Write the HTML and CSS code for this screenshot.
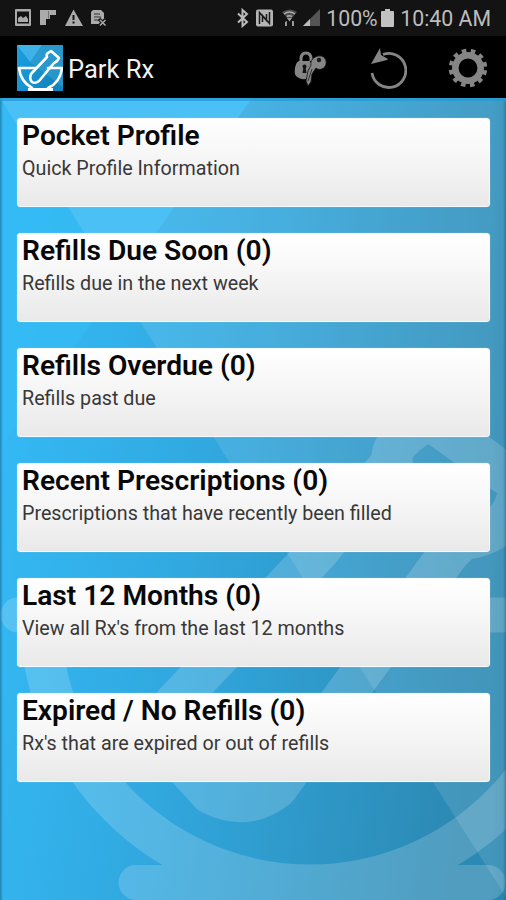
FILE: index.html
```html
<!DOCTYPE html>
<html lang="en">
<head>
<meta charset="utf-8">
<title>Park Rx</title>
<link rel="stylesheet" href="styles.css">
</head>
<body>
<div class="status">
  <svg class="status-left" width="96" height="20" viewBox="14 8 96 20" fill="#aaa">
    <path fill-rule="evenodd" d="M16 9h14q1 0 1 1v15q0 1-1 1H16q-1 0-1-1V10q0-1 1-1zm1 2.500v12h12v-12z"/>
    <path d="M18 22v-4l3-2 2 2 3-2 2 3v3z"/>
    <path d="M40 10h16v5h-6v4h-4v6h-6z"/>
    <path fill="#777" d="M48 11h1v8h-1z"/>
    <path fill-rule="evenodd" d="M73.500 9.500 83 26H65zM72.500 15v5h2v-5zm0 6.500v2h2v-2z"/>
    <path d="M93 10h8l3 3v6l-3 5h-10V12z"/>
    <path d="M94 14h6M94 17h7M94 20h5" stroke="#333" stroke-width="1.200"/>
    <path d="m99 19 7 7m0-7-7 7" stroke="#151515" stroke-width="3.500"/>
    <path d="m100 20 5.500 5.500m0-5.500-5.500 5.500" stroke="#aaa" stroke-width="1.500"/>
  </svg>
  <div class="status-right">
    <svg width="90" height="20" viewBox="234 8 90 20">
      <path d="m238 13.500 9 8.500-4.500 4V10l4.500 4-9 8.500" fill="none" stroke="#bbb" stroke-width="2"/>
      <rect x="256" y="9.500" width="17" height="17" rx="2" fill="#b5b5b5"/>
      <path d="M259.500 24V12.500l7 8V14m3-2v11.500l-7-8V22" fill="none" stroke="#1b1b1b" stroke-width="1.500"/>
      <path d="M282 12q8-5 15 0l-7.500 9z" fill="#4e4e4e"/>
      <path d="M284 14q5.500-4 11 0M287 16.500q2.500-1.500 5 0" fill="none" stroke="#aaa" stroke-width="1.500"/>
      <path d="M289.500 21.500 287 18h5zM285 22l2-1v5h-2zM292 21h2v5h-2z" fill="#999"/>
      <path d="M320 9v17h-17z" fill="#555"/><path d="m303 26 7-7v7z" fill="#bbb"/>
    </svg>
    <span class="pct">100%</span>
    <svg class="battery" width="13" height="18" viewBox="0 0 13 18"><path d="M4 0h5v2h3q1 0 1 1v14q0 1-1 1H1q-1 0-1-1V3q0-1 1-1h3z" fill="#c2c2c2"/></svg>
    <span class="clock">10:40 AM</span>
  </div>
</div>
<header class="bar">
  <svg class="logo" width="46" height="46" viewBox="0 0 46 46">
    <defs><linearGradient id="lg" x2="1" y2=".4"><stop stop-color="#1b9fe0"/><stop offset="1" stop-color="#1185bd"/></linearGradient></defs>
    <rect width="46" height="46" fill="url(#lg)"/>
    <path d="M0 0h25L13 17z" fill="#3fb3e9"/>
    <path d="m13 17 33 25V0H25z" fill="#3ba3d2" opacity=".55"/>
    <g fill="none" stroke="#fff" stroke-width="2.600" stroke-linejoin="round" stroke-linecap="round">
      <path d="M19 23H2c1 9 6 16 13 20M31 23h14c-1 10-7 17-14 20"/>
      <path d="m14 29 16-17q-1-3 1-4l3-2 8 7q-2 4-5 5L22 36q-4 3-7 1-3-3-1-8z"/>
    </g>
    <path d="M11 43h25v3H11z" fill="#fff"/>
  </svg>
  <h1 class="app-title">Park Rx</h1>
  <nav class="actions">
    <svg width="34" height="38" viewBox="294 50 34 38">
      <path d="M301 62v-2q0-6 5-6t5 6v2" fill="none" stroke="#858585" stroke-width="3"/>
      <path d="M299 62h11q3 5 0 17-9 3-14-2-2-3-1-8 1-6 4-7z" fill="#858585"/>
      <circle cx="304.500" cy="67.500" r="2" fill="#111"/><path d="M303.500 68h2l1 6h-4z" fill="#111"/>
      <path d="M318 57c6-1 9 4 8 8-1 5-7 7-10 4l-4 6-1 8-3 4-2-5 2-10 3-6c-1-5 3-8 7-9z" fill="#858585" stroke="#111" stroke-width=".8"/>
      <circle cx="319" cy="61" r="2.200" fill="#1b1b1b"/>
      <path d="m308 82 4-12" stroke="#333" stroke-width="1"/>
    </svg>
    <svg width="38" height="42" viewBox="370 47 38 42">
      <path d="M384 54.500a17 17 0 1 1-11 18.500" fill="none" stroke="#858585" stroke-width="2.800"/>
      <path d="m381 48 1 7 7 4-1 1-16 4z" fill="#858585"/>
    </svg>
    <svg width="40" height="40" viewBox="-20 -20 40 40">
      <circle r="12.700" fill="none" stroke="#858585" stroke-width="6.600"/>
      <circle r="17.200" fill="none" stroke="#858585" stroke-width="4.200" stroke-dasharray="4.500 4.506" stroke-dashoffset="-2.300"/>
    </svg>
  </nav>
</header>
<main class="screen">
  <svg class="backdrop" viewBox="0 98 506 802" preserveAspectRatio="none">
    <defs>
      <linearGradient id="base" gradientUnits="userSpaceOnUse" x1="0" y1="450" x2="506" y2="530">
        <stop stop-color="#34b9f4"/><stop offset=".4" stop-color="#31a8df"/><stop offset="1" stop-color="#2c89b3"/>
      </linearGradient>
      <linearGradient id="edge" gradientUnits="userSpaceOnUse" x1="0" y1="0" x2="506" y2="0">
        <stop stop-color="#135b82" stop-opacity=".55"/><stop offset=".006" stop-color="#135b82" stop-opacity="0"/>
        <stop offset=".97" stop-color="#135b82" stop-opacity="0"/><stop offset=".994" stop-color="#135b82" stop-opacity=".06"/><stop offset="1" stop-color="#135b82" stop-opacity=".5"/>
      </linearGradient>
    </defs>
    <path d="M0 98h506v802H0z" fill="url(#base)"/>
    <path d="M0 98 118 287 0 448z" fill="#34baf4" opacity=".7"/>
    <path d="M0 98h252L118 287z" fill="#4bc0f5"/>
    <path d="M252 98h254v799L118 287z" fill="#fff" opacity=".11"/>
    <g opacity=".17" fill="none" stroke="#fff" stroke-width="41">
      <path d="M18 615H520" stroke-width="35" stroke-linecap="round"/>
      <path d="M40.500 615.500a269.500 269.500 0 0 0 539 0"/>
      <path d="M136 882.500H488" stroke-width="35" stroke-linecap="round"/>
      <path d="m392 462-75 91-147 155q-14 20 6 48l35 38q36 18 66-6L449 553l13-13q34-4 50-28l10-26-92-66q-18 8-31 22-8 8-7 20z" stroke-linejoin="round"/>
    </g>
    <path d="M0 98h506v802H0z" fill="url(#edge)"/>
    <path d="M0 98h506v3H0z" fill="#239bd4" opacity=".75"/>
  </svg>
  <div class="list">
    <section class="card"><h2>Pocket Profile</h2><p>Quick Profile Information</p></section>
    <section class="card"><h2>Refills Due Soon (0)</h2><p>Refills due in the next week</p></section>
    <section class="card"><h2>Refills Overdue (0)</h2><p>Refills past due</p></section>
    <section class="card"><h2>Recent Prescriptions (0)</h2><p>Prescriptions that have recently been filled</p></section>
    <section class="card"><h2>Last 12 Months (0)</h2><p>View all Rx's from the last 12 months</p></section>
    <section class="card"><h2>Expired / No Refills (0)</h2><p>Rx's that are expired or out of refills</p></section>
  </div>
</main>
</body>
</html>
```
FILE: styles.css
```css
* { box-sizing: border-box; }
body { margin: 0; width: 506px; height: 900px; overflow: hidden; background: #000; font-family: Roboto, "Liberation Sans", sans-serif; display: flex; flex-direction: column; }
svg { display: block; flex: none; }
.status { height: 36px; flex: none; background: #131313; display: flex; align-items: center; justify-content: space-between; padding: 0 15px 0 14px; color: #bdbdbd; font-size: 21.300px; line-height: 36px; }
.status-right { display: flex; align-items: center; white-space: nowrap; }
.status-right span { position: relative; top: 1px; }
.pct { margin-left: 2px; width: 52px; }
.battery { margin: 0 6px 0 3px; }
.bar { height: 62px; flex: none; background: #000; display: flex; align-items: center; padding: 2px 18px 0 17px; }
.app-title { margin: 2px 0 0 5px; font-size: 25.500px; font-weight: 400; line-height: 32px; color: #f2f2f2; }
.actions { margin-left: auto; display: flex; align-items: center; gap: 41px; }
.screen { position: relative; flex: 1; }
.backdrop { position: absolute; inset: 0; width: 100%; height: 100%; }
.list { position: relative; display: flex; flex-direction: column; gap: 26px; padding: 20px 16px 0 17px; }
.card { height: 89px; border-radius: 3px; background: linear-gradient(#fff, #f7f7f7 40%, #e9e9e9); border: 1px solid #f4fafd; padding: 0 4px; box-shadow: 0 0 1px rgba(255, 255, 255, .6); }
.card h2 { margin: 0; font-size: 28.150px; font-weight: 600; line-height: 34px; color: #080808; white-space: nowrap; }
.card p { margin: 3px 0 0; font-size: 19.700px; font-weight: 400; line-height: 26px; color: #383838; white-space: nowrap; }
```
